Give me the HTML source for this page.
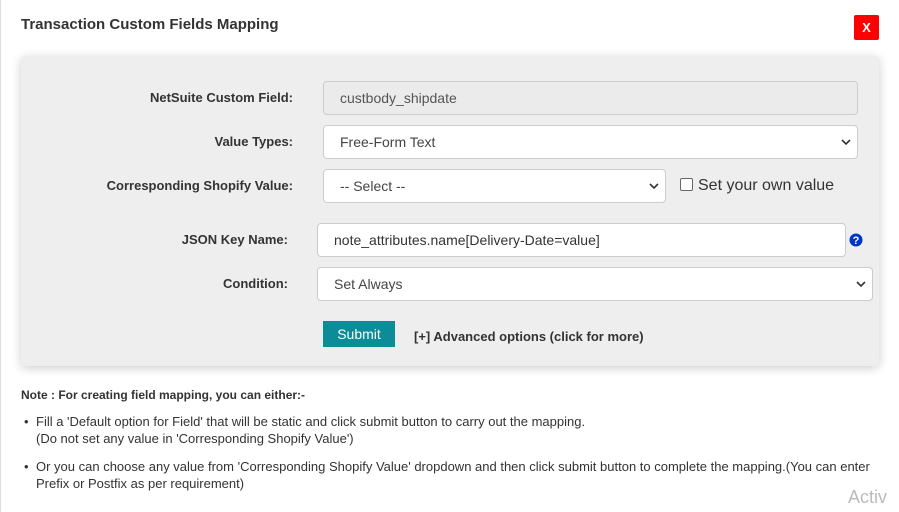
<!DOCTYPE html><html><head><style>
body{margin:0;width:899px;height:512px;background:#fff;font-family:"Liberation Sans",Arial,sans-serif;position:relative;overflow:hidden;color:#333}
.a{position:absolute}
.lb{position:absolute;font-weight:bold;font-size:13px;color:#333;text-align:right;white-space:nowrap}
.f{position:absolute;box-sizing:border-box;border:1px solid #ccc;border-radius:4px;background:#fff;font-size:14px;color:#444;padding-left:16px;display:flex;align-items:center}
.chev{position:absolute;right:6px;top:50%;margin-top:-4px}
</style></head><body>
<div class="a" style="left:0;top:0;width:1px;height:512px;background:#ddd"></div>
<div class="a" style="left:21px;top:16px;font-size:15px;font-weight:bold;color:#333">Transaction Custom Fields Mapping</div>
<div class="a" style="left:854px;top:15px;width:25px;height:25px;background:#f00;border-radius:2px;color:#fff;font-weight:bold;font-size:13px;text-align:center;line-height:25px">X</div>
<div class="a" style="left:21px;top:56px;width:858px;height:310px;background:#eeeeee;border-radius:4px;box-shadow:0 2px 10px rgba(0,0,0,.2)"></div>
<div class="lb" style="right:606px;top:90px">NetSuite Custom Field:</div>
<div class="f" style="left:323px;top:81px;width:535px;height:34px;background:#ebebeb;color:#555">custbody_shipdate</div>
<div class="lb" style="right:606px;top:134px">Value Types:</div>
<div class="f" style="left:323px;top:125px;width:535px;height:34px">Free-Form Text<svg class="chev" width="10" height="8" viewBox="0 0 10 8"><path d="M1 2l4 4 4-4" stroke="#333" stroke-width="1.6" fill="none"/></svg></div>
<div class="lb" style="right:606px;top:178px">Corresponding Shopify Value:</div>
<div class="f" style="left:323px;top:169px;width:343px;height:34px">-- Select --<svg class="chev" width="10" height="8" viewBox="0 0 10 8"><path d="M1 2l4 4 4-4" stroke="#333" stroke-width="1.6" fill="none"/></svg></div>
<div class="a" style="left:680px;top:178px;width:11px;height:11px;border:1px solid #666;border-radius:2px;background:#fff"></div>
<div class="a" style="left:698px;top:177px;font-size:16px;color:#333">Set your own value</div>
<div class="lb" style="right:611px;top:232px">JSON Key Name:</div>
<div class="f" style="left:317px;top:223px;width:529px;height:34px;color:#333">note_attributes.name[Delivery-Date=value]</div>
<svg class="a" style="left:849px;top:233px" width="14" height="14" viewBox="0 0 14 14"><circle cx="7" cy="7" r="6.5" fill="#0033cc"/><text x="7" y="11" font-size="11" font-weight="bold" fill="#fff" text-anchor="middle" font-family="Liberation Sans">?</text></svg>
<div class="lb" style="right:611px;top:276px">Condition:</div>
<div class="f" style="left:317px;top:267px;width:556px;height:34px">Set Always<svg class="chev" width="10" height="8" viewBox="0 0 10 8"><path d="M1 2l4 4 4-4" stroke="#333" stroke-width="1.6" fill="none"/></svg></div>
<div class="a" style="left:323px;top:321px;width:72px;height:26px;background:#0b8c96;color:#fff;font-size:14px;text-align:center;line-height:26px">Submit</div>
<div class="a" style="left:414px;top:329px;font-size:13px;font-weight:bold;color:#333">[+] Advanced options (click for more)</div>
<div class="a" style="left:21px;top:388px;font-size:12px;font-weight:bold;color:#333">Note : For creating field mapping, you can either:-</div>
<div class="a" style="left:24px;top:413px;font-size:13px;line-height:17px;color:#333">•</div>
<div class="a" style="left:36px;top:413px;font-size:13px;line-height:17px;color:#333">Fill a 'Default option for Field' that will be static and click submit button to carry out the mapping.<br>(Do not set any value in 'Corresponding Shopify Value')</div>
<div class="a" style="left:24px;top:458px;font-size:13px;line-height:17px;color:#333">•</div>
<div class="a" style="left:36px;top:458px;width:845px;font-size:13px;line-height:17px;color:#333">Or you can choose any value from 'Corresponding Shopify Value' dropdown and then click submit button to complete the mapping.(You can enter Prefix or Postfix as per requirement)</div>
<div class="a" style="left:848px;top:487px;font-size:18px;color:#bbb">Activ</div>
</body></html>
